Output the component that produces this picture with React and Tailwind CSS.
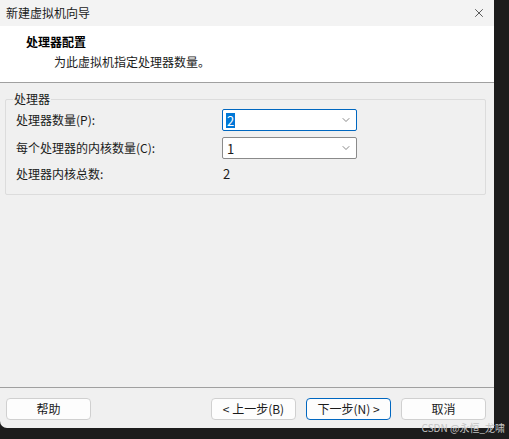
import { ChevronDown, X } from 'lucide-react';

const font = { fontFamily: '"Microsoft YaHei", "Noto Sans CJK SC", "Liberation Sans", sans-serif' };

function Combo({ value, focused }) {
  return (
    <div
      className={`flex h-[22px] w-[135px] items-center justify-between rounded-[2px] border bg-white pl-[3px] pr-[4px] ${
        focused ? 'border-[#0067c0]' : 'border-[#8a8a8a]'
      }`}
    >
      {focused ? (
        <span className="bg-[#0078d7] px-[1px] text-[13px] leading-[15px] text-white">{value}</span>
      ) : (
        <span className="px-[1px] text-[13px] leading-[15px] text-[#1a1a1a]">{value}</span>
      )}
      <ChevronDown className="h-[12px] w-[12px] text-[#606060]" strokeWidth={1.5} />
    </div>
  );
}

function WizButton({ children, primary }) {
  return (
    <button
      className={`flex h-[22px] w-[85px] items-center justify-center rounded-[4px] border bg-[#fdfdfd] text-[12px] text-[#1a1a1a] ${
        primary ? 'border-[#0067c0]' : 'border-[#d0d0d0]'
      }`}
    >
      {children}
    </button>
  );
}

export default function App() {
  return (
    <div className="relative h-[439px] w-[509px] overflow-hidden bg-[#1c1c1c]" style={font}>
      <div className="flex h-[428px] w-[494px] flex-col overflow-hidden rounded-bl-[7px] bg-[#f0f0f0]">
        {/* title bar */}
        <div className="flex h-[26px] shrink-0 items-center justify-between bg-[#f3f3f3] pl-[6px] pr-[8px]">
          <span className="text-[12px] text-[#1a1a1a]">新建虚拟机向导</span>
          <X className="h-[14px] w-[14px] text-[#1a1a1a]" strokeWidth={1.2} />
        </div>

        {/* header */}
        <div className="flex h-[57px] shrink-0 flex-col border-b border-[#a0a0a0] bg-white pl-[26px] pt-[8px]">
          <span className="text-[12px] font-bold leading-[16px] text-black">处理器配置</span>
          <span className="mt-[4px] pl-[28px] text-[12px] leading-[16px] text-[#1a1a1a]">为此虚拟机指定处理器数量。</span>
        </div>

        {/* body */}
        <div className="flex-1 px-[5px] pt-[16px]">
          <div className="relative h-[96px] w-[481px] rounded-[2px] border border-[#dcdcdc]">
            <span className="absolute left-[7px] top-[-9px] bg-[#f0f0f0] px-[1px] text-[12px] leading-[16px] text-[#1a1a1a]">
              处理器
            </span>
            <div className="flex flex-col pl-[10px] pt-[9px] text-[12px] text-[#1a1a1a]">
              <div className="flex h-[22px] items-center">
                <span className="w-[206px]">处理器数量(P):</span>
                <Combo value="2" focused />
              </div>
              <div className="mt-[6px] flex h-[22px] items-center">
                <span className="w-[206px]">每个处理器的内核数量(C):</span>
                <Combo value="1" />
              </div>
              <div className="mt-[7px] flex h-[16px] items-center">
                <span className="w-[206px]">处理器内核总数:</span>
                <span className="pl-[1px] text-[13px]">2</span>
              </div>
            </div>
          </div>
        </div>

        {/* footer */}
        <div className="flex h-[41px] shrink-0 items-start border-t border-[#a0a0a0] px-[6px] pt-[10px]">
          <WizButton>帮助</WizButton>
          <div className="ml-auto flex gap-[10px] pr-[2px]">
            <WizButton>&lt; 上一步(B)</WizButton>
            <WizButton primary>下一步(N) &gt;</WizButton>
            <WizButton>取消</WizButton>
          </div>
        </div>
      </div>

      <span className="absolute right-[4px] top-[422px] text-[10px] leading-[12px] text-[#c4c4c4]">CSDN @永恒_龙啸</span>
    </div>
  );
}
